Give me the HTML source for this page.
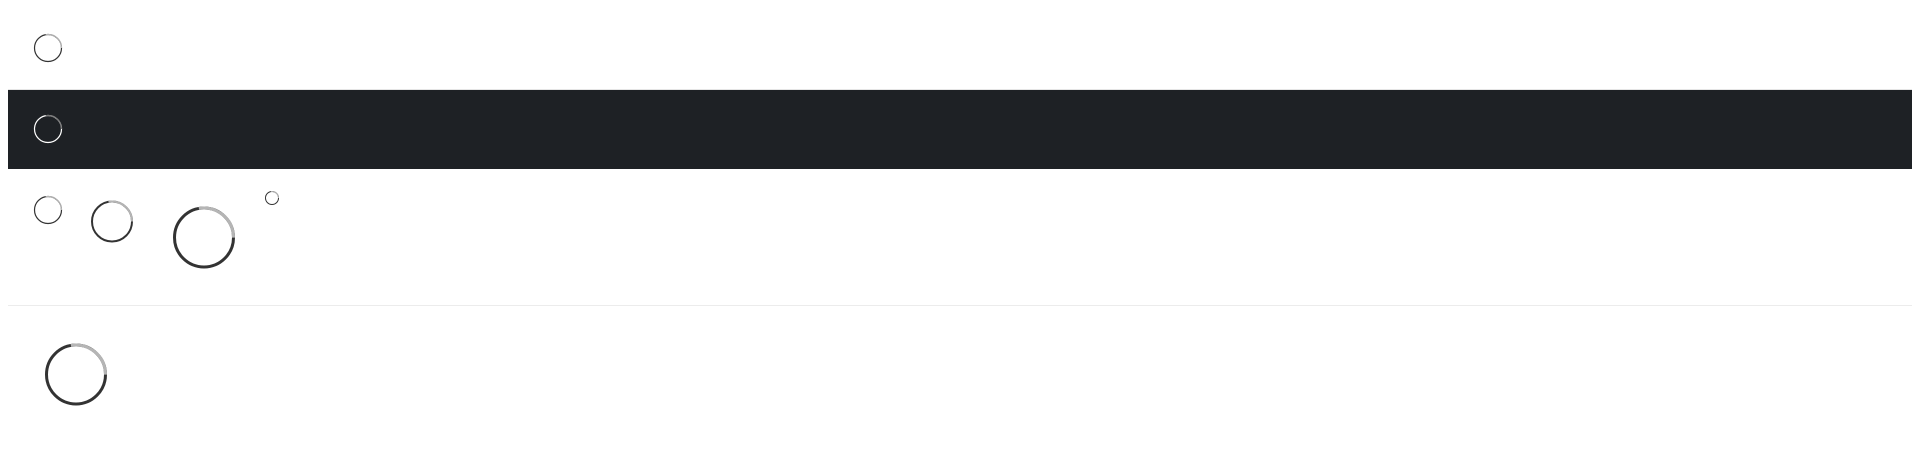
<!DOCTYPE html>
<html><head><style>
html,body{margin:0;padding:0;background:#fff;width:1920px;height:451px;overflow:hidden;position:relative}
.band{position:absolute;left:8px;top:89px;width:1904px;height:80px;background:#1e2125;border-top:1px solid #e5e5e5;box-sizing:border-box}
.hr{position:absolute;left:8px;top:305px;width:1904px;height:1px;background:#ececec}
svg{position:absolute;overflow:visible}
</style></head><body>
<div class="band"></div>
<div class="hr"></div>
<svg id="s" width="1920" height="451" style="left:0;top:0"></svg>
<svg width="1920" height="451" style="left:0;top:0">
<!-- cx,cy,r,sw,dark,light -->
<g fill="none">
<circle cx="48" cy="48" r="13.5" stroke="#333" stroke-width="1.2"/>
<circle cx="48" cy="48" r="13.5" stroke="#b5b5b5" stroke-width="1.2" stroke-dasharray="23.6 200" transform="rotate(-100 48 48)"/>
<circle cx="48" cy="129" r="13.5" stroke="#fff" stroke-width="1.2"/>
<circle cx="48" cy="129" r="13.5" stroke="#777" stroke-width="1.2" stroke-dasharray="23.6 200" transform="rotate(-100 48 129)"/>
<circle cx="48" cy="210" r="13.5" stroke="#333" stroke-width="1.2"/>
<circle cx="48" cy="210" r="13.5" stroke="#b5b5b5" stroke-width="1.2" stroke-dasharray="23.6 200" transform="rotate(-100 48 210)"/>
<circle cx="112" cy="221.5" r="20" stroke="#333" stroke-width="2"/>
<circle cx="112" cy="221.5" r="20" stroke="#b5b5b5" stroke-width="2" stroke-dasharray="34.9 300" transform="rotate(-100 112 221.5)"/>
<circle cx="204" cy="237.5" r="29.5" stroke="#333" stroke-width="3"/>
<circle cx="204" cy="237.5" r="29.5" stroke="#b5b5b5" stroke-width="3" stroke-dasharray="51.5 400" transform="rotate(-100 204 237.5)"/>
<circle cx="272" cy="198" r="6.5" stroke="#333" stroke-width="1"/>
<circle cx="272" cy="198" r="6.5" stroke="#b5b5b5" stroke-width="1" stroke-dasharray="11.3 100" transform="rotate(-100 272 198)"/>
<circle cx="76" cy="374.5" r="29.5" stroke="#333" stroke-width="3"/>
<circle cx="76" cy="374.5" r="29.5" stroke="#b5b5b5" stroke-width="3" stroke-dasharray="51.5 400" transform="rotate(-100 76 374.5)"/>
</g>
</svg>
</body></html>
